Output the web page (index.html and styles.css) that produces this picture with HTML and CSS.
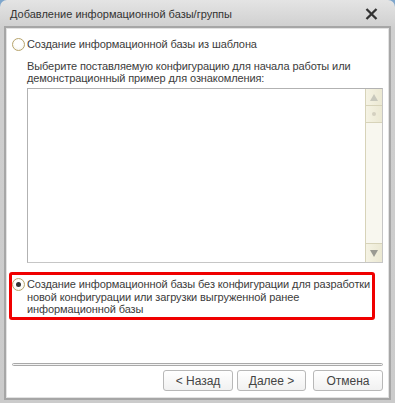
FILE: index.html
```html
<!DOCTYPE html>
<html lang="ru">
<head>
    <meta charset="UTF-8">
    <title>Добавление информационной базы/группы</title>
    <link rel="stylesheet" href="styles.css">
</head>
<body>
    <div class="window">
        <div class="titlebar">
            <span class="title">Добавление информационной базы/группы</span>
            <svg class="close" width="13" height="12" viewBox="0 0 13 12">
                <path d="M1.5 1 L11.5 11 M11.5 1 L1.5 11" stroke="#333" stroke-width="2.3" fill="none"/>
            </svg>
        </div>
        <div class="content">
            <div class="option first">
                <span class="radio"></span>
                <span class="label">Создание информационной базы из шаблона</span>
            </div>
            <div class="desc">Выберите поставляемую конфигурацию для начала работы или<br>демонстрационный пример для ознакомления:</div>
            <div class="list">
                <div class="list-body"></div>
                <div class="scrollbar">
                    <div class="sb-btn up"><span class="arrow-up"></span></div>
                    <div class="sb-thumb"><span class="grip"></span></div>
                    <div class="sb-track"></div>
                    <div class="sb-btn down"><span class="arrow-down"></span></div>
                </div>
            </div>
            <div class="option marked">
                <span class="radio checked"></span>
                <span class="label">Создание информационной базы без конфигурации для разработки<br>новой конфигурации или загрузки выгруженной ранее<br>информационной базы</span>
            </div>
            <div class="footer">
                <div class="separator"></div>
                <div class="buttons">
                    <button class="btn">&lt; Назад</button>
                    <button class="btn next">Далее &gt;</button>
                    <button class="btn cancel">Отмена</button>
                </div>
            </div>
        </div>
    </div>
</body>
</html>
```

FILE: styles.css
```css
body {
    margin: 0;
    background: #7ea6cc;
    font-family: "Liberation Sans", Arial, sans-serif;
    font-size: 11px;
    color: #3c3c3c;
}
.window {
    width: 395px;
    height: 403px;
    box-sizing: border-box;
    background: linear-gradient(#e4e4e4, #cfcfcf 28px, #cbcbcb);
    border-radius: 7px 7px 0 0;
    padding: 0 7px 6px 7px;
    display: flex;
    flex-direction: column;
}
.titlebar {
    height: 28px;
    display: flex;
    align-items: center;
    justify-content: space-between;
    padding: 0 10px 1px 3px;
    flex-shrink: 0;
}
.title {
    font-size: 11px;
    color: #333;
}
.close {
    display: block;
}
.content {
    flex: 1;
    background: #fff;
    box-shadow: 0 0 0 1px #e2e2e2, 0 0 0 3px #a6a6a6;
    display: flex;
    flex-direction: column;
    padding: 0 5px 6px 2px;
    letter-spacing: -0.1px;
}
.option {
    display: flex;
    align-items: flex-start;
    line-height: 12.5px;
}
.option.first {
    margin-top: 9px;
    padding-left: 3px;
    line-height: 13px;
}
.label {
    white-space: nowrap;
}
.radio {
    width: 11px;
    height: 11px;
    border: 1px solid #b7a46c;
    border-radius: 50%;
    background: radial-gradient(circle at 50% 40%, #fff 40%, #f1efe4);
    flex-shrink: 0;
    margin-right: 2px;
    position: relative;
}
.radio.checked::after {
    content: "";
    position: absolute;
    left: 3px;
    top: 3px;
    width: 5px;
    height: 5px;
    border-radius: 50%;
    background: #333;
}
.desc {
    margin: 9px 0 0 18px;
    line-height: 12px;
    white-space: nowrap;
}
.list {
    margin: 4px 0 0 18px;
    width: 356px;
    height: 175px;
    box-sizing: border-box;
    border: 1px solid #b2b2b2;
    border-right-color: #c6c6c6;
    border-bottom-color: #c6c6c6;
    display: flex;
}
.list-body {
    flex: 1;
}
.scrollbar {
    width: 16px;
    display: flex;
    flex-direction: column;
    background: #f8f7ef;
    border-left: 1px solid #d7d3b9;
}
.sb-btn, .sb-thumb {
    height: 16px;
    background: linear-gradient(90deg, #f5f3e4, #ebe8d2);
    border-bottom: 1px solid #d7d3b9;
    display: flex;
    align-items: center;
    justify-content: center;
}
.sb-btn.down {
    height: 18px;
    border-bottom: none;
    border-top: 1px solid #d7d3b9;
}
.sb-track {
    flex: 1;
}
.arrow-up {
    width: 0;
    height: 0;
    border-left: 4px solid transparent;
    border-right: 4px solid transparent;
    border-bottom: 7px solid #c8c8bc;
}
.arrow-down {
    width: 0;
    height: 0;
    border-left: 4px solid transparent;
    border-right: 4px solid transparent;
    border-top: 7px solid #9a9a92;
}
.grip {
    width: 4px;
    height: 4px;
    border-radius: 50%;
    background: #d4d0c0;
}
.option.marked {
    margin-top: 9px;
    width: 366px;
    box-sizing: border-box;
    border: 3px solid #f00000;
    border-radius: 3px;
    padding: 3px 0 1px 0;
}
.footer {
    margin-top: auto;
}
.separator {
    margin-left: 3px;
    height: 1px;
    border: 1px solid #a9a9a9;
    border-radius: 2px;
    background: #f2f2f2;
}
.buttons {
    display: flex;
    justify-content: flex-end;
    margin-top: 4px;
}
.btn {
    width: 70px;
    height: 21px;
    border: 1px solid #b8b8b8;
    border-radius: 3px;
    background: linear-gradient(#ffffff, #f1f1f1);
    font-family: "Liberation Sans", Arial, sans-serif;
    font-size: 12px;
    color: #444;
    padding: 0;
    margin-left: 4px;
}
.btn.next {
    width: 69px;
}
.btn.cancel {
    margin-left: 7px;
}
```
